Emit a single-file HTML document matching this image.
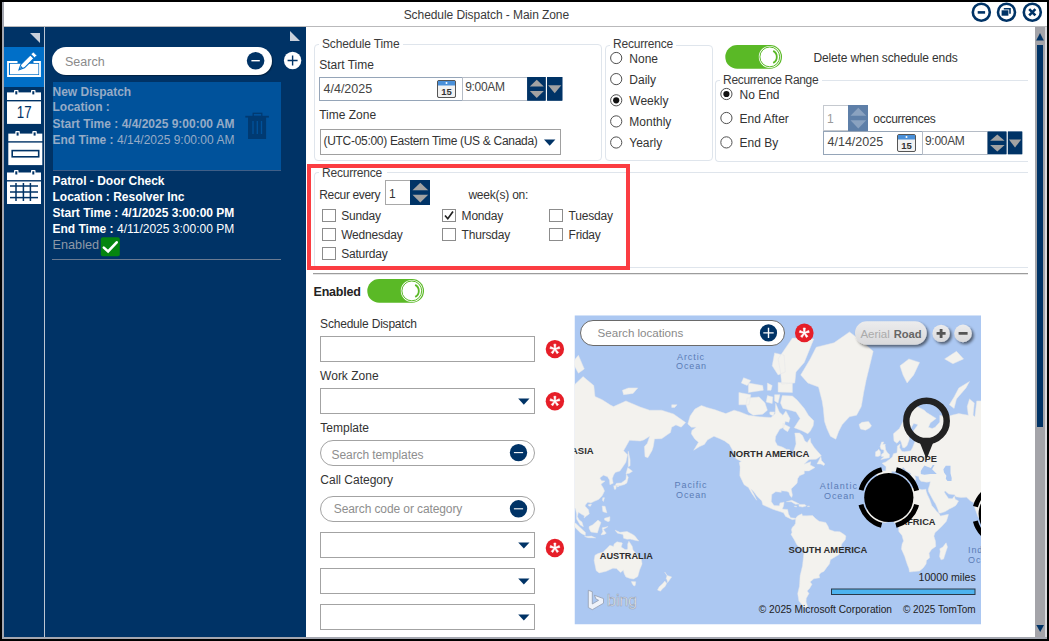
<!DOCTYPE html><html><head><meta charset="utf-8"><style>
*{margin:0;padding:0;box-sizing:border-box}
html,body{width:1049px;height:641px;overflow:hidden;background:#000;font-family:"Liberation Sans",sans-serif}
.t{position:absolute;white-space:nowrap}
.r{position:absolute}
svg{position:absolute}
</style></head><body>

<div class="r" style="left:2px;top:2px;width:1045px;height:637px;background:#a4a7b0"></div>
<div class="r" style="left:4px;top:2px;width:1043px;height:24px;background:#fff"></div>
<div class="r" style="left:4px;top:26px;width:1043px;height:1px;background:#b9b9bb"></div>
<div class="r" style="left:1045px;top:27px;width:2px;height:610px;background:#d9d9dc"></div>
<div class="r" style="left:4px;top:27px;width:1041px;height:610px;background:#fff"></div>
<div class="t" style="left:403.7px;top:9.3px;font-size:12px;line-height:12px;color:#3a3a3a;letter-spacing:-0.07px">Schedule Dispatch - Main Zone</div>
<svg style="left:960px;top:0" width="89" height="26" viewBox="960 0 89 26"><g fill="none" stroke="#003366" stroke-width="2.6"><circle cx="981.3" cy="12.2" r="8.5"/><circle cx="1006.5" cy="12.2" r="8.5"/><circle cx="1032.3" cy="12.2" r="8.5"/><path d="M977.7 12.4h7.4"/><path d="M1029.2 9.1l6.2 6.2M1035.4 9.1l-6.2 6.2"/></g><rect x="1001.6" y="10.3" width="6.8" height="5.4" fill="#003366"/><path d="M1003.8 8.8h6.2v5" fill="none" stroke="#003366" stroke-width="1.6"/></svg>
<div class="r" style="left:4px;top:27px;width:40px;height:610px;background:#003366"></div>
<div class="r" style="left:44px;top:27px;width:1px;height:610px;background:#bcc6d3"></div>
<div class="r" style="left:45px;top:27px;width:261px;height:610px;background:#003366"></div>
<div class="r" style="left:4px;top:47px;width:40px;height:40px;background:#006fc8"></div>
<svg style="left:0;top:0" width="310" height="260" viewBox="0 0 310 260"><path d="M30 33H40V43Z" fill="#c9d0da"/><path d="M290 31V41H300Z" fill="#c9d0da"/><path d="M17.5 62H8V76H40V62H33.5" fill="none" stroke="#fff" stroke-width="1.8"/><rect x="10" y="63.8" width="28.4" height="10.5" fill="#fff"/><g transform="translate(19 69.8) rotate(-45)"><path d="M0 0L5.2 -2.5H18.6V2.5H5.2Z" fill="#fff" stroke="#006fc8" stroke-width="1.1"/><path d="M1.2 0L4.2 -1.2V1.2Z" fill="#006fc8"/><rect x="19.4" y="-2.5" width="3.4" height="5" fill="#fff" stroke="#006fc8" stroke-width="0.8"/></g></svg>
<svg style="left:0;top:85px" width="50" height="125" viewBox="0 85 50 125"><rect x="7" y="92.4" width="34" height="7.6" fill="#fff"/><rect x="7" y="101.4" width="34" height="22.5" fill="#fff"/><rect x="14" y="89.9" width="4.5" height="5" rx="0.8" fill="#fff"/><rect x="15.3" y="91.2" width="2" height="3.2" fill="#003366"/><rect x="31" y="89.9" width="4.5" height="5" rx="0.8" fill="#fff"/><rect x="32.3" y="91.2" width="2" height="3.2" fill="#003366"/><text x="16.8" y="118.3" font-family="Liberation Sans" font-size="17" fill="#003366" textLength="14.8" lengthAdjust="spacingAndGlyphs">17</text><rect x="8.3" y="133.6" width="34" height="7.6" fill="#fff"/><rect x="8.3" y="142.6" width="34" height="22.5" fill="#fff"/><rect x="15.3" y="131.1" width="4.5" height="5" rx="0.8" fill="#fff"/><rect x="16.6" y="132.4" width="2" height="3.2" fill="#003366"/><rect x="32.3" y="131.1" width="4.5" height="5" rx="0.8" fill="#fff"/><rect x="33.599999999999994" y="132.4" width="2" height="3.2" fill="#003366"/><rect x="12.2" y="150.6" width="26.5" height="6.2" fill="none" stroke="#003366" stroke-width="1.6"/><rect x="7" y="172.5" width="34" height="7.6" fill="#fff"/><rect x="7" y="181.5" width="34" height="22.5" fill="#fff"/><rect x="14" y="170.0" width="4.5" height="5" rx="0.8" fill="#fff"/><rect x="15.3" y="171.3" width="2" height="3.2" fill="#003366"/><rect x="31" y="170.0" width="4.5" height="5" rx="0.8" fill="#fff"/><rect x="32.3" y="171.3" width="2" height="3.2" fill="#003366"/><g stroke="#003366" stroke-width="1.5"><path d="M10 186H38"/><path d="M10 192H38"/><path d="M10 197.6H38"/><path d="M16 183V201"/><path d="M23.4 183V201"/><path d="M30.4 183V201"/></g></svg>
<div class="r" style="left:52px;top:47px;width:220px;height:28px;background:#fff;border-radius:14px;box-shadow:1px 1px 1px rgba(0,0,0,.35)"></div>
<div class="t" style="left:65.0px;top:55.8px;font-size:12.5px;line-height:12.5px;color:#8a8a8a;">Search</div>
<svg style="left:240px;top:45px" width="70" height="32" viewBox="240 45 70 32"><circle cx="255.6" cy="60.7" r="8.8" fill="#003366"/><path d="M251.4 60.7h8.4" stroke="#fff" stroke-width="1.4"/><circle cx="292.6" cy="60.5" r="8.7" fill="#fff"/><path d="M287.6 60.5h10M292.6 55.5v10" stroke="#003366" stroke-width="1.4"/></svg>
<div class="r" style="left:53px;top:82px;width:228px;height:89px;background:#00529b;border-bottom:1px solid #3f5f88"></div>
<div class="t" style="left:52.5px;top:85.7px;font-size:12px;line-height:12px;font-weight:bold;color:#96abc6;">New Dispatch</div>
<div class="t" style="left:52.5px;top:101.4px;font-size:12px;line-height:12px;font-weight:bold;color:#96abc6;">Location :</div>
<div class="t" style="left:52.5px;top:117.5px;font-size:12px;line-height:12px;font-weight:bold;color:#96abc6;">Start Time : 4/4/2025 9:00:00 AM</div>
<div class="t" style="left:52.5px;top:133.5px;font-size:12px;line-height:12px;color:#96abc6;"><b>End Time :</b> 4/14/2025 9:00:00 AM</div>
<svg style="left:240px;top:108px" width="35" height="35" viewBox="240 108 35 35"><g fill="#003a72"><rect x="245.3" y="115.8" width="23.6" height="1.8"/><rect x="253.2" y="113.3" width="8.6" height="3.2" fill="none" stroke="#003a72" stroke-width="1.3"/><rect x="248" y="117" width="18.1" height="22"/></g><g stroke="#00529b" stroke-width="1.3"><path d="M253 121v13M257.3 121v13M261.5 121v13"/></g></svg>
<div class="t" style="left:52.5px;top:175.2px;font-size:12px;line-height:12px;font-weight:bold;color:#ffffff;">Patrol - Door Check</div>
<div class="t" style="left:52.5px;top:191.1px;font-size:12px;line-height:12px;font-weight:bold;color:#ffffff;">Location : Resolver Inc</div>
<div class="t" style="left:52.5px;top:207.1px;font-size:12px;line-height:12px;font-weight:bold;color:#ffffff;">Start Time : 4/1/2025 3:00:00 PM</div>
<div class="t" style="left:52.5px;top:223.1px;font-size:12px;line-height:12px;color:#ffffff;"><b>End Time :</b> 4/11/2025 3:00:00 PM</div>
<div class="t" style="left:52.5px;top:238.6px;font-size:12.7px;line-height:12.7px;color:#8d99a8;">Enabled</div>
<svg style="left:100px;top:236px" width="21" height="21" viewBox="100 236 21 21"><rect x="100.8" y="237.2" width="19" height="19" rx="2" fill="#05850f"/><path d="M103.8 247.6l4.3 3.9l8.6-9.2" fill="none" stroke="#fff" stroke-width="2.6" stroke-linecap="round"/></svg>
<div class="r" style="left:52px;top:259px;width:229px;height:1px;background:#6a7b92"></div>
<div class="r" style="left:1035px;top:27px;width:10px;height:610px;background:#a4a4a9"></div>
<div class="r" style="left:1037px;top:45px;width:6px;height:382px;background:#003366"></div>
<svg style="left:1035px;top:27px" width="10" height="610" viewBox="1035 27 10 610"><path d="M1036.2 40.5L1040 33L1043.8 40.5Z" fill="#003366"/><path d="M1036.3 625L1044 625L1040.2 632Z" fill="#003366"/></svg>
<div class="r" style="left:314px;top:44px;width:288px;height:117px;border:1px solid #dfe5ec;border-radius:4px;"></div>
<div class="r" style="left:319px;top:42px;width:84px;height:4px;background:#fff"></div>
<div class="t" style="left:322.0px;top:37.7px;font-size:12px;line-height:12px;color:#3b3b3b;letter-spacing:-0.15px">Schedule Time</div>
<div class="t" style="left:319.2px;top:59.1px;font-size:12px;line-height:12px;color:#333;">Start Time</div>
<div class="r" style="left:319px;top:77px;width:144px;height:24px;border:1px solid #95a5b8;background:#fff"></div>
<div class="t" style="left:323.5px;top:82.7px;font-size:12.5px;line-height:12.5px;color:#444;">4/4/2025</div>
<div class="r" style="left:462px;top:77px;width:66px;height:24px;border:1px solid #b5bcc6;background:#fff"></div>
<div class="t" style="left:465.2px;top:80.9px;font-size:12px;line-height:12px;color:#444;letter-spacing:-0.3px">9:00AM</div>
<svg style="left:0;top:0" width="1049" height="641" viewBox="0 0 1049 641"><rect x="437.5" y="80.5" width="18" height="17" rx="1.5" fill="#f2f2f2" stroke="#555" stroke-width="1"/><rect x="438" y="81" width="17" height="4.5" fill="#4a90d9"/><circle cx="446.5" cy="83" r="1" fill="#fff"/><text x="446.5" y="95.3" font-family="Liberation Sans" font-weight="bold" font-size="9.5" fill="#333" text-anchor="middle">15</text><rect x="527.3" y="77" width="18.300000000000068" height="23.599999999999994" fill="#003366"/><path d="M529.8 86.6H543.8000000000001L536.75 79.8Z" fill="#a2a2a2"/><path d="M529.8 91.0H543.8000000000001L536.75 98.0Z" fill="#a2a2a2"/><rect x="547.1" y="77" width="15.199999999999932" height="23.599999999999994" fill="#003366"/><path d="M548.1 85.3H561.3L554.7 93.3Z" fill="#a2a2a2"/><rect x="897.5" y="134.5" width="18" height="17" rx="1.5" fill="#f2f2f2" stroke="#555" stroke-width="1"/><rect x="898" y="135" width="17" height="4.5" fill="#4a90d9"/><circle cx="906.5" cy="137" r="1" fill="#fff"/><text x="906.5" y="149.3" font-family="Liberation Sans" font-weight="bold" font-size="9.5" fill="#333" text-anchor="middle">15</text><rect x="987.6" y="131.6" width="18.799999999999955" height="22.599999999999994" fill="#003366"/><path d="M990.1 140.7H1004.6L997.3 134.4Z" fill="#a2a2a2"/><path d="M990.1 145.09999999999997H1004.6L997.3 151.6Z" fill="#a2a2a2"/><rect x="1007.9" y="131.6" width="14.300000000000068" height="22.599999999999994" fill="#003366"/><path d="M1008.9 139.39999999999998H1021.2L1015.05 147.39999999999998Z" fill="#a2a2a2"/><rect x="410" y="180" width="20" height="25" fill="#003366"/><path d="M412.5 190.3H428.2L420.3 182.8Z" fill="#a2a2a2"/><path d="M412.5 194.7H428.2L420.3 202.4Z" fill="#a2a2a2"/><rect x="848" y="105" width="20" height="26" fill="#5e7fa8"/><path d="M850.5 115.8H866.2L858.3 107.8Z" fill="#8aa2c0"/><path d="M850.5 120.2H866.2L858.3 128.4Z" fill="#8aa2c0"/></svg>
<div class="t" style="left:319.2px;top:108.6px;font-size:12px;line-height:12px;color:#333;">Time Zone</div>
<div class="r" style="left:320px;top:129px;width:241px;height:26px;border:1px solid #a0a0a0;background:#fff"></div>
<div class="t" style="left:323.5px;top:134.8px;font-size:12px;line-height:12px;color:#333;letter-spacing:-0.3px">(UTC-05:00) Eastern Time (US &amp; Canada)</div>
<svg style="left:0;top:0" width="1049" height="641" viewBox="0 0 1049 641"><path d="M544 139.6H555.4L549.7 145.8Z" fill="#003366"/></svg>
<div class="r" style="left:605px;top:45px;width:108px;height:116px;border:1px solid #dfe5ec;border-radius:4px;"></div>
<div class="r" style="left:610px;top:43px;width:66px;height:4px;background:#fff"></div>
<div class="t" style="left:613.0px;top:37.7px;font-size:12px;line-height:12px;color:#3b3b3b;letter-spacing:-0.2px">Recurrence</div>
<svg style="left:0;top:0" width="1049" height="641" viewBox="0 0 1049 641"><circle cx="616.2" cy="58" r="5.6" fill="#fff" stroke="#505050" stroke-width="1"/><circle cx="616.2" cy="79.1" r="5.6" fill="#fff" stroke="#505050" stroke-width="1"/><circle cx="616.2" cy="100.3" r="5.6" fill="#fff" stroke="#505050" stroke-width="1"/><circle cx="616.2" cy="100.3" r="3.1" fill="#111"/><circle cx="616.2" cy="121.4" r="5.6" fill="#fff" stroke="#505050" stroke-width="1"/><circle cx="616.2" cy="142.5" r="5.6" fill="#fff" stroke="#505050" stroke-width="1"/><circle cx="726.4" cy="94" r="5.6" fill="#fff" stroke="#505050" stroke-width="1"/><circle cx="726.4" cy="94" r="3.1" fill="#111"/><circle cx="726.4" cy="118" r="5.6" fill="#fff" stroke="#505050" stroke-width="1"/><circle cx="726.4" cy="142.4" r="5.6" fill="#fff" stroke="#505050" stroke-width="1"/></svg>
<div class="t" style="left:629.3px;top:52.9px;font-size:12px;line-height:12px;color:#333;">None</div>
<div class="t" style="left:629.3px;top:74.0px;font-size:12px;line-height:12px;color:#333;">Daily</div>
<div class="t" style="left:629.3px;top:95.2px;font-size:12px;line-height:12px;color:#333;">Weekly</div>
<div class="t" style="left:629.3px;top:116.3px;font-size:12px;line-height:12px;color:#333;">Monthly</div>
<div class="t" style="left:629.3px;top:137.4px;font-size:12px;line-height:12px;color:#333;">Yearly</div>
<div class="t" style="left:739.5px;top:88.9px;font-size:12px;line-height:12px;color:#333;">No End</div>
<div class="t" style="left:739.5px;top:112.9px;font-size:12px;line-height:12px;color:#333;">End After</div>
<div class="t" style="left:739.5px;top:137.3px;font-size:12px;line-height:12px;color:#333;">End By</div>
<svg style="left:724.8px;top:44.8px" width="58" height="25" viewBox="0 0 58 25"><rect x="0.3" y="0" width="56.7" height="23.8" rx="11.9" fill="#5ab926"/><circle cx="44.8" cy="11.9" r="11" fill="#fff"/><circle cx="44.8" cy="11.9" r="9.9" fill="none" stroke="#5ab926" stroke-width="1"/><path d="M48.2 5.9A6.8 6.8 0 0 1 48.2 17.9" fill="none" stroke="#5ab926" stroke-width="1.8"/></svg>
<div class="t" style="left:813.4px;top:51.9px;font-size:12px;line-height:12px;color:#333;letter-spacing:-0.13px">Delete when schedule ends</div>
<div class="r" style="left:715px;top:80px;width:313px;height:82px;border:1px solid #dfe5ec;border-radius:4px;border-right:none;border-top-right-radius:0;border-bottom-right-radius:0;"></div>
<div class="r" style="left:720px;top:78px;width:102px;height:4px;background:#fff"></div>
<div class="t" style="left:723.1px;top:73.7px;font-size:12px;line-height:12px;color:#3b3b3b;letter-spacing:-0.35px">Recurrence Range</div>
<div class="r" style="left:823px;top:105px;width:26px;height:26px;border:1px solid #c5c9cf;background:#fff"></div>
<div class="t" style="left:827.0px;top:112.7px;font-size:12px;line-height:12px;color:#9a9a9a;">1</div>
<div class="t" style="left:873.3px;top:113.0px;font-size:12px;line-height:12px;color:#333;letter-spacing:-0.28px">occurrences</div>
<div class="r" style="left:823px;top:131px;width:100px;height:24px;border:1px solid #95a5b8;background:#fff"></div>
<div class="t" style="left:827.5px;top:136.1px;font-size:12.5px;line-height:12.5px;color:#444;">4/14/2025</div>
<div class="r" style="left:922px;top:131px;width:66px;height:24px;border:1px solid #b5bcc6;background:#fff"></div>
<div class="t" style="left:925.0px;top:134.8px;font-size:12px;line-height:12px;color:#444;letter-spacing:-0.3px">9:00AM</div>
<svg style="left:0;top:0" width="1049" height="641" viewBox="0 0 1049 641"><rect x="897.5" y="134.5" width="18" height="17" rx="1.5" fill="#f2f2f2" stroke="#555" stroke-width="1"/><rect x="898" y="135" width="17" height="4.5" fill="#4a90d9"/><circle cx="906.5" cy="137" r="1" fill="#fff"/><text x="906.5" y="149.3" font-family="Liberation Sans" font-weight="bold" font-size="9.5" fill="#333" text-anchor="middle">15</text><rect x="987.6" y="131.6" width="18.799999999999955" height="22.599999999999994" fill="#003366"/><path d="M990.1 140.7H1004.6L997.3 134.4Z" fill="#a2a2a2"/><path d="M990.1 145.09999999999997H1004.6L997.3 151.6Z" fill="#a2a2a2"/><rect x="1007.9" y="131.6" width="14.300000000000068" height="22.599999999999994" fill="#003366"/><path d="M1008.9 139.39999999999998H1021.2L1015.05 147.39999999999998Z" fill="#a2a2a2"/><rect x="848" y="105" width="20" height="26" fill="#5e7fa8"/><path d="M850.5 115.8H866.2L858.3 107.8Z" fill="#8aa2c0"/><path d="M850.5 120.2H866.2L858.3 128.4Z" fill="#8aa2c0"/><rect x="437.5" y="80.5" width="18" height="17" rx="1.5" fill="#f2f2f2" stroke="#555" stroke-width="1"/><rect x="438" y="81" width="17" height="4.5" fill="#4a90d9"/><circle cx="446.5" cy="83" r="1" fill="#fff"/><text x="446.5" y="95.3" font-family="Liberation Sans" font-weight="bold" font-size="9.5" fill="#333" text-anchor="middle">15</text><rect x="527.3" y="77" width="18.300000000000068" height="23.599999999999994" fill="#003366"/><path d="M529.8 86.6H543.8000000000001L536.75 79.8Z" fill="#a2a2a2"/><path d="M529.8 91.0H543.8000000000001L536.75 98.0Z" fill="#a2a2a2"/><rect x="547.1" y="77" width="15.199999999999932" height="23.599999999999994" fill="#003366"/><path d="M548.1 85.3H561.3L554.7 93.3Z" fill="#a2a2a2"/></svg>
<div class="r" style="left:314px;top:172px;width:714px;height:96px;border:1px solid #dfe5ec;border-radius:4px;border-right:none;border-top-right-radius:0;border-bottom-right-radius:0;"></div>
<div class="r" style="left:319px;top:170px;width:68px;height:4px;background:#fff"></div>
<div class="t" style="left:322.0px;top:167.1px;font-size:12px;line-height:12px;color:#3b3b3b;letter-spacing:-0.2px">Recurrence</div>
<div class="t" style="left:319.3px;top:188.5px;font-size:12px;line-height:12px;color:#333;letter-spacing:-0.35px">Recur every</div>
<div class="r" style="left:385px;top:180px;width:26px;height:25px;border:1px solid #a8a8a8;background:#fff"></div>
<div class="t" style="left:389.0px;top:188.2px;font-size:12px;line-height:12px;color:#333;">1</div>
<svg style="left:0;top:0" width="1049" height="641" viewBox="0 0 1049 641"><rect x="410" y="180" width="20" height="25" fill="#003366"/><path d="M412.5 190.3H428.2L420.3 182.8Z" fill="#a2a2a2"/><path d="M412.5 194.7H428.2L420.3 202.4Z" fill="#a2a2a2"/></svg>
<div class="t" style="left:468.4px;top:188.6px;font-size:12px;line-height:12px;color:#333;letter-spacing:-0.2px">week(s) on:</div>
<svg style="left:0;top:0" width="1049" height="641" viewBox="0 0 1049 641"><rect x="322.5" y="209.5" width="13" height="12" fill="#fff" stroke="#8c8c8c" stroke-width="1"/><rect x="442.5" y="209.5" width="13" height="12" fill="#fff" stroke="#8c8c8c" stroke-width="1"/><path d="M445 215.5l2.8 3.2l5.2-7.2" fill="none" stroke="#222" stroke-width="1.7"/><rect x="549.5" y="209.5" width="13" height="12" fill="#fff" stroke="#8c8c8c" stroke-width="1"/><rect x="322.5" y="228.5" width="13" height="12" fill="#fff" stroke="#8c8c8c" stroke-width="1"/><rect x="442.5" y="228.5" width="13" height="12" fill="#fff" stroke="#8c8c8c" stroke-width="1"/><rect x="549.5" y="228.5" width="13" height="12" fill="#fff" stroke="#8c8c8c" stroke-width="1"/><rect x="322.5" y="247.5" width="13" height="12" fill="#fff" stroke="#8c8c8c" stroke-width="1"/></svg>
<div class="t" style="left:341.2px;top:210.2px;font-size:12px;line-height:12px;color:#333;letter-spacing:-0.2px">Sunday</div>
<div class="t" style="left:461.6px;top:210.2px;font-size:12px;line-height:12px;color:#333;letter-spacing:-0.2px">Monday</div>
<div class="t" style="left:568.5px;top:210.2px;font-size:12px;line-height:12px;color:#333;letter-spacing:-0.2px">Tuesday</div>
<div class="t" style="left:341.2px;top:229.2px;font-size:12px;line-height:12px;color:#333;letter-spacing:-0.2px">Wednesday</div>
<div class="t" style="left:461.6px;top:229.2px;font-size:12px;line-height:12px;color:#333;letter-spacing:-0.2px">Thursday</div>
<div class="t" style="left:568.5px;top:229.2px;font-size:12px;line-height:12px;color:#333;letter-spacing:-0.2px">Friday</div>
<div class="t" style="left:341.2px;top:248.2px;font-size:12px;line-height:12px;color:#333;letter-spacing:-0.2px">Saturday</div>
<div class="r" style="left:307px;top:164px;width:323px;height:106px;border:4px solid #fb3d42"></div>
<div class="r" style="left:313px;top:273px;width:715px;height:1px;background:#9c9c9c"></div>
<div class="r" style="left:313px;top:274px;width:715px;height:1px;background:#e6e6e6"></div>
<div class="t" style="left:313.5px;top:286.2px;font-size:12.5px;line-height:12.5px;font-weight:bold;color:#222;letter-spacing:-0.2px">Enabled</div>
<svg style="left:367.2px;top:278.6px" width="58" height="25" viewBox="0 0 58 25"><rect x="0.3" y="0" width="56.7" height="23.8" rx="11.9" fill="#5ab926"/><circle cx="44.8" cy="11.9" r="11" fill="#fff"/><circle cx="44.8" cy="11.9" r="9.9" fill="none" stroke="#5ab926" stroke-width="1"/><path d="M48.2 5.9A6.8 6.8 0 0 1 48.2 17.9" fill="none" stroke="#5ab926" stroke-width="1.8"/></svg>
<div class="t" style="left:320.1px;top:318.3px;font-size:12px;line-height:12px;color:#333;letter-spacing:-0.2px">Schedule Dispatch</div>
<div class="r" style="left:320px;top:336px;width:215px;height:26px;border:1px solid #a3a3a3;background:#fff"></div>
<div class="t" style="left:320.1px;top:369.8px;font-size:12px;line-height:12px;color:#333;">Work Zone</div>
<div class="r" style="left:320px;top:388px;width:215px;height:26px;border:1px solid #a3a3a3;background:#fff"></div>
<div class="t" style="left:320.3px;top:422.0px;font-size:12px;line-height:12px;color:#333;">Template</div>
<div class="r" style="left:320px;top:440px;width:215px;height:26px;border:1px solid #a3a3a3;background:#fff;border-radius:13px"></div>
<div class="t" style="left:331.6px;top:448.7px;font-size:12px;line-height:12px;color:#8e8e8e;letter-spacing:-0.1px">Search templates</div>
<div class="t" style="left:320.3px;top:474.4px;font-size:12px;line-height:12px;color:#333;">Call Category</div>
<div class="r" style="left:320px;top:496px;width:215px;height:26px;border:1px solid #a3a3a3;background:#fff;border-radius:13px"></div>
<div class="t" style="left:333.8px;top:503.2px;font-size:12px;line-height:12px;color:#8e8e8e;letter-spacing:-0.1px">Search code or category</div>
<div class="r" style="left:320px;top:532px;width:215px;height:26px;border:1px solid #a3a3a3;background:#fff"></div>
<div class="r" style="left:320px;top:568px;width:215px;height:26px;border:1px solid #a3a3a3;background:#fff"></div>
<div class="r" style="left:320px;top:604px;width:215px;height:26px;border:1px solid #a3a3a3;background:#fff"></div>
<svg style="left:0;top:0" width="1049" height="641" viewBox="0 0 1049 641"><circle cx="554.9" cy="349.1" r="9.2" fill="#e61e28"/><path d="M554.50 349.10L553.85 344.20L555.95 344.20L555.30 349.10ZM554.78 349.48L549.92 348.58L550.56 346.59L555.02 348.72ZM555.22 349.34L552.87 353.68L551.17 352.45L554.58 348.86ZM555.22 348.86L558.63 352.45L556.93 353.68L554.58 349.34ZM554.78 348.72L559.24 346.59L559.88 348.58L555.02 349.48Z" fill="#fff" stroke="#fff" stroke-width="0.6" stroke-linejoin="round"/><circle cx="554.9" cy="349.1" r="1" fill="#fff"/><circle cx="554.9" cy="401.2" r="9.2" fill="#e61e28"/><path d="M554.50 401.20L553.85 396.30L555.95 396.30L555.30 401.20ZM554.78 401.58L549.92 400.68L550.56 398.69L555.02 400.82ZM555.22 401.44L552.87 405.78L551.17 404.55L554.58 400.96ZM555.22 400.96L558.63 404.55L556.93 405.78L554.58 401.44ZM554.78 400.82L559.24 398.69L559.88 400.68L555.02 401.58Z" fill="#fff" stroke="#fff" stroke-width="0.6" stroke-linejoin="round"/><circle cx="554.9" cy="401.2" r="1" fill="#fff"/><circle cx="554.9" cy="548" r="9.2" fill="#e61e28"/><path d="M554.50 548.00L553.85 543.10L555.95 543.10L555.30 548.00ZM554.78 548.38L549.92 547.48L550.56 545.49L555.02 547.62ZM555.22 548.24L552.87 552.58L551.17 551.35L554.58 547.76ZM555.22 547.76L558.63 551.35L556.93 552.58L554.58 548.24ZM554.78 547.62L559.24 545.49L559.88 547.48L555.02 548.38Z" fill="#fff" stroke="#fff" stroke-width="0.6" stroke-linejoin="round"/><circle cx="554.9" cy="548" r="1" fill="#fff"/><path d="M518.2 398.6H529.5L523.85 404.7Z" fill="#003366"/><path d="M518.2 542.5H529.5L523.85 548.6Z" fill="#003366"/><path d="M518.2 578.5H529.5L523.85 584.6Z" fill="#003366"/><path d="M518.2 614.5H529.5L523.85 620.6Z" fill="#003366"/><circle cx="518.5" cy="452.6" r="8.7" fill="#003366"/><path d="M513.9 452.6h9.2" stroke="#fff" stroke-width="1.1"/><circle cx="518.5" cy="508.8" r="8.7" fill="#003366"/><path d="M513.9 508.8h9.2" stroke="#fff" stroke-width="1.1"/></svg>
<svg style="left:0;top:0" width="1049" height="641" viewBox="0 0 1049 641"><defs><clipPath id="mc"><rect x="574.5" y="315.3" width="406.5" height="309.2"/></clipPath></defs><g clip-path="url(#mc)"><rect x="574.5" y="315.3" width="406.5" height="309.2" fill="#acc8f2"/><path d="M687.8 424.1L690.1 415.9L694.9 409.1L701.4 405.5L706.8 407.4L715.1 409.8L719.9 411.6L725.8 413.6L734.1 410.2L740.1 411.9L748.4 415.2L759.1 416.8L771.0 417.5L775.1 413.6L775.7 403.3L779.3 411.9L782.9 415.2L785.9 410.9L790.0 418.4L788.8 422.3L785.3 421.4L784.1 427.2L779.9 429.1L775.7 436.3L775.1 441.0L777.5 445.5L782.3 447.0L786.4 449.2L789.7 449.6L790.0 454.8L792.4 457.1L793.6 455.8L793.8 450.8L796.0 444.0L795.4 437.5L794.8 433.0L799.5 433.0L802.5 435.5L804.9 441.0L807.2 442.6L810.2 438.2L810.8 442.2L814.4 447.7L819.7 453.8L821.3 455.8L816.2 459.2L809.0 459.6L804.3 464.1L810.8 461.7L810.2 464.9L815.0 467.5L809.0 470.9L804.3 470.9L804.3 473.8L799.5 475.7L797.7 478.7L797.1 483.2L791.2 488.9L792.4 495.0L791.8 497.4L790.0 495.7L788.8 492.3L786.4 491.3L781.1 490.7L781.3 492.3L775.7 491.7L771.8 494.4L771.3 501.6L774.0 505.6L779.3 505.8L780.0 502.9L784.1 502.2L783.5 506.0L782.3 509.1L787.6 509.4L788.5 514.0L790.6 517.7L795.4 518.3L795.6 519.1L792.4 519.7L785.6 516.5L783.5 512.8L778.1 511.0L773.4 509.5L762.7 504.8L761.8 500.9L757.3 496.6L753.8 491.7L751.0 488.9L754.3 495.0L756.7 500.3L752.0 493.7L748.4 487.5L744.1 484.7L741.9 480.2L739.8 475.8L740.1 466.7L739.2 462.5L741.3 461.4L735.9 458.6L732.9 450.8L729.4 444.4L724.6 441.0L719.9 438.7L713.9 436.3L707.4 439.9L704.4 444.4L699.7 446.6L693.7 450.2L698.5 442.2L694.9 439.2L691.3 433.8L691.9 430.4L696.1 427.2L691.3 427.2ZM259.8 424.1L262.1 415.9L266.9 409.1L273.4 405.5L278.8 407.4L287.1 409.8L291.9 411.6L297.8 413.6L306.1 410.2L312.1 411.9L320.4 415.2L331.1 416.8L343.0 417.5L347.1 413.6L347.7 403.3L351.3 411.9L354.9 415.2L357.9 410.9L362.0 418.4L360.8 422.3L357.3 421.4L356.1 427.2L351.9 429.1L347.7 436.3L347.1 441.0L349.5 445.5L354.3 447.0L358.4 449.2L361.7 449.6L362.0 454.8L364.4 457.1L365.6 455.8L365.8 450.8L368.0 444.0L367.4 437.5L366.8 433.0L371.5 433.0L374.5 435.5L376.9 441.0L379.2 442.6L382.2 438.2L382.8 442.2L386.4 447.7L391.7 453.8L393.3 455.8L388.2 459.2L381.0 459.6L376.3 464.1L382.8 461.7L382.2 464.9L387.0 467.5L381.0 470.9L376.3 470.9L376.3 473.8L371.5 475.7L369.7 478.7L369.1 483.2L363.2 488.9L364.4 495.0L363.8 497.4L362.0 495.7L360.8 492.3L358.4 491.3L353.1 490.7L353.3 492.3L347.7 491.7L343.8 494.4L343.3 501.6L346.0 505.6L351.3 505.8L352.0 502.9L356.1 502.2L355.5 506.0L354.3 509.1L359.6 509.4L360.5 514.0L362.6 517.7L367.4 518.3L367.6 519.1L364.4 519.7L357.6 516.5L355.5 512.8L350.1 511.0L345.4 509.5L334.7 504.8L333.8 500.9L329.3 496.6L325.8 491.7L323.0 488.9L326.3 495.0L328.7 500.3L324.0 493.7L320.4 487.5L316.1 484.7L313.9 480.2L311.8 475.8L312.1 466.7L311.2 462.5L313.3 461.4L307.9 458.6L304.9 450.8L301.4 444.4L296.6 441.0L291.9 438.7L285.9 436.3L279.4 439.9L276.4 444.4L271.7 446.6L265.7 450.2L270.5 442.2L266.9 439.2L263.3 433.8L263.9 430.4L268.1 427.2L263.3 427.2ZM1115.8 424.1L1118.1 415.9L1122.9 409.1L1129.4 405.5L1134.8 407.4L1143.1 409.8L1147.9 411.6L1153.8 413.6L1162.1 410.2L1168.1 411.9L1176.4 415.2L1187.1 416.8L1199.0 417.5L1203.2 413.6L1203.7 403.3L1207.3 411.9L1210.9 415.2L1213.8 410.9L1218.0 418.4L1216.8 422.3L1213.3 421.4L1212.1 427.2L1207.9 429.1L1203.7 436.3L1203.2 441.0L1205.5 445.5L1210.3 447.0L1214.4 449.2L1217.7 449.6L1218.0 454.8L1220.4 457.1L1221.6 455.8L1221.8 450.8L1224.0 444.0L1223.4 437.5L1222.8 433.0L1227.5 433.0L1230.5 435.5L1232.9 441.0L1235.2 442.6L1238.2 438.2L1238.8 442.2L1242.4 447.7L1247.7 453.8L1249.3 455.8L1244.2 459.2L1237.0 459.6L1232.3 464.1L1238.8 461.7L1238.2 464.9L1243.0 467.5L1237.0 470.9L1232.3 470.9L1232.3 473.8L1227.5 475.7L1225.7 478.7L1225.1 483.2L1219.2 488.9L1220.4 495.0L1219.8 497.4L1218.0 495.7L1216.8 492.3L1214.4 491.3L1209.1 490.7L1209.3 492.3L1203.7 491.7L1199.8 494.4L1199.3 501.6L1202.0 505.6L1207.3 505.8L1208.0 502.9L1212.1 502.2L1211.5 506.0L1210.3 509.1L1215.6 509.4L1216.5 514.0L1218.6 517.7L1223.4 518.3L1223.6 519.1L1220.4 519.7L1213.6 516.5L1211.5 512.8L1206.1 511.0L1201.4 509.5L1190.7 504.8L1189.8 500.9L1185.3 496.6L1181.8 491.7L1179.0 488.9L1182.3 495.0L1184.7 500.3L1180.0 493.7L1176.4 487.5L1172.1 484.7L1169.9 480.2L1167.8 475.8L1168.1 466.7L1167.2 462.5L1169.3 461.4L1163.9 458.6L1160.9 450.8L1157.4 444.4L1152.6 441.0L1147.9 438.7L1141.9 436.3L1135.4 439.9L1132.4 444.4L1127.7 446.6L1121.7 450.2L1126.5 442.2L1122.9 439.2L1119.3 433.8L1119.9 430.4L1124.1 427.2L1119.3 427.2ZM800.7 374.9L810.2 358.9L816.2 347.2L834.0 342.8L849.5 331.9L863.7 342.8L873.2 351.3L866.1 380.4L863.7 392.5L861.3 406.6L856.6 415.2L849.5 416.8L842.3 424.4L838.8 431.2L835.8 439.2L830.4 436.3L826.9 428.5L824.5 421.4L823.3 408.4L822.1 400.9L818.5 387.0L807.8 383.0ZM372.7 374.9L382.2 358.9L388.2 347.2L406.0 342.8L421.5 331.9L435.7 342.8L445.2 351.3L438.1 380.4L435.7 392.5L433.3 406.6L428.6 415.2L421.5 416.8L414.3 424.4L410.8 431.2L407.8 439.2L402.4 436.3L398.9 428.5L396.5 421.4L395.3 408.4L394.1 400.9L390.5 387.0L379.8 383.0ZM1228.7 374.9L1238.2 358.9L1244.2 347.2L1262.0 342.8L1277.5 331.9L1291.7 342.8L1301.2 351.3L1294.1 380.4L1291.7 392.5L1289.3 406.6L1284.6 415.2L1277.5 416.8L1270.3 424.4L1266.8 431.2L1263.8 439.2L1258.4 436.3L1254.9 428.5L1252.5 421.4L1251.3 408.4L1250.1 400.9L1246.5 387.0L1235.8 383.0ZM795.6 518.3L797.7 515.8L801.9 513.8L802.5 515.8L806.7 515.8L812.6 515.6L815.3 518.3L819.1 521.3L825.7 522.4L828.1 526.3L829.2 529.6L834.6 531.4L839.9 531.7L843.5 534.1L845.9 536.1L845.3 539.7L841.7 544.0L840.9 549.5L839.1 554.6L835.8 556.5L830.4 559.8L829.6 563.8L826.9 567.2L823.9 571.4L820.9 572.7L819.1 575.1L819.7 577.8L813.8 578.8L810.2 581.9L812.0 584.3L809.6 588.4L807.2 591.0L809.0 593.6L806.3 598.2L806.1 602.0L807.8 607.0L804.3 607.4L798.9 601.0L797.7 593.6L799.5 585.9L800.1 575.8L802.5 565.8L803.9 552.7L802.6 549.5L797.1 545.2L794.2 539.7L791.0 534.4L792.0 532.3L791.4 529.6L792.4 527.2L794.2 525.4L795.4 523.6L795.6 520.1ZM367.6 518.3L369.7 515.8L373.9 513.8L374.5 515.8L378.7 515.8L384.6 515.6L387.3 518.3L391.1 521.3L397.7 522.4L400.1 526.3L401.2 529.6L406.6 531.4L411.9 531.7L415.5 534.1L417.9 536.1L417.3 539.7L413.7 544.0L412.9 549.5L411.1 554.6L407.8 556.5L402.4 559.8L401.6 563.8L398.9 567.2L395.9 571.4L392.9 572.7L391.1 575.1L391.7 577.8L385.8 578.8L382.2 581.9L384.0 584.3L381.6 588.4L379.2 591.0L381.0 593.6L378.3 598.2L378.1 602.0L379.8 607.0L376.3 607.4L370.9 601.0L369.7 593.6L371.5 585.9L372.1 575.8L374.5 565.8L375.9 552.7L374.6 549.5L369.1 545.2L366.2 539.7L363.0 534.4L364.0 532.3L363.4 529.6L364.4 527.2L366.2 525.4L367.4 523.6L367.6 520.1ZM1223.6 518.3L1225.7 515.8L1229.9 513.8L1230.5 515.8L1234.7 515.8L1240.6 515.6L1243.3 518.3L1247.1 521.3L1253.7 522.4L1256.1 526.3L1257.2 529.6L1262.6 531.4L1267.9 531.7L1271.5 534.1L1273.9 536.1L1273.3 539.7L1269.7 544.0L1268.9 549.5L1267.1 554.6L1263.8 556.5L1258.4 559.8L1257.6 563.8L1254.9 567.2L1251.9 571.4L1248.9 572.7L1247.1 575.1L1247.7 577.8L1241.8 578.8L1238.2 581.9L1240.0 584.3L1237.6 588.4L1235.2 591.0L1237.0 593.6L1234.3 598.2L1234.1 602.0L1235.8 607.0L1232.3 607.4L1226.9 601.0L1225.7 593.6L1227.5 585.9L1228.1 575.8L1230.5 565.8L1231.9 552.7L1230.6 549.5L1225.1 545.2L1222.2 539.7L1219.0 534.4L1220.0 532.3L1219.4 529.6L1220.4 527.2L1222.2 525.4L1223.4 523.6L1223.6 520.1ZM880.4 482.8L885.1 483.8L891.1 481.3L899.4 480.5L900.6 481.3L899.6 484.7L901.2 486.8L905.6 487.8L910.1 490.6L911.3 488.2L914.8 487.4L917.2 488.6L922.0 489.7L925.9 489.2L926.1 491.1L927.3 494.4L929.7 499.6L931.8 505.6L933.4 507.3L936.8 511.6L939.0 513.4L940.4 516.0L948.4 514.3L948.1 516.0L946.4 521.3L942.2 526.0L938.6 529.6L935.1 532.6L933.9 536.1L935.4 541.0L935.8 546.4L931.5 549.5L929.1 553.3L929.7 557.8L926.5 560.4L926.1 563.9L923.2 567.9L919.6 571.0L913.7 571.6L909.5 572.0L908.9 568.6L907.1 563.9L904.7 556.5L901.4 548.9L902.1 544.0L903.5 541.0L902.0 535.5L898.8 531.4L898.6 527.2L899.0 523.6L897.6 523.0L894.6 523.3L892.9 520.9L889.3 521.1L885.1 522.7L882.1 522.2L878.6 523.2L873.8 520.3L871.7 518.3L869.7 515.5L867.5 513.5L866.7 510.7L867.9 504.8L867.3 502.9L870.3 496.4L872.0 494.1L875.8 491.3L876.2 487.5L879.4 485.4ZM452.4 482.8L457.1 483.8L463.1 481.3L471.4 480.5L472.6 481.3L471.6 484.7L473.2 486.8L477.6 487.8L482.1 490.6L483.3 488.2L486.8 487.4L489.2 488.6L494.0 489.7L497.9 489.2L498.1 491.1L499.3 494.4L501.7 499.6L503.8 505.6L505.4 507.3L508.8 511.6L511.0 513.4L512.4 516.0L520.4 514.3L520.1 516.0L518.4 521.3L514.2 526.0L510.6 529.6L507.1 532.6L505.9 536.1L507.4 541.0L507.8 546.4L503.5 549.5L501.1 553.3L501.7 557.8L498.5 560.4L498.1 563.9L495.2 567.9L491.6 571.0L485.7 571.6L481.5 572.0L480.9 568.6L479.1 563.9L476.7 556.5L473.4 548.9L474.1 544.0L475.5 541.0L474.0 535.5L470.8 531.4L470.6 527.2L471.0 523.6L469.6 523.0L466.6 523.3L464.9 520.9L461.3 521.1L457.1 522.7L454.1 522.2L450.6 523.2L445.8 520.3L443.7 518.3L441.7 515.5L439.5 513.5L438.7 510.7L439.9 504.8L439.3 502.9L442.3 496.4L444.0 494.1L447.8 491.3L448.2 487.5L451.4 485.4ZM1308.4 482.8L1313.1 483.8L1319.1 481.3L1327.4 480.5L1328.6 481.3L1327.6 484.7L1329.2 486.8L1333.6 487.8L1338.1 490.6L1339.3 488.2L1342.8 487.4L1345.2 488.6L1350.0 489.7L1353.9 489.2L1354.1 491.1L1355.3 494.4L1357.7 499.6L1359.8 505.6L1361.4 507.3L1364.8 511.6L1367.0 513.4L1368.4 516.0L1376.4 514.3L1376.1 516.0L1374.3 521.3L1370.2 526.0L1366.6 529.6L1363.1 532.6L1361.9 536.1L1363.4 541.0L1363.8 546.4L1359.5 549.5L1357.1 553.3L1357.7 557.8L1354.5 560.4L1354.1 563.9L1351.2 567.9L1347.6 571.0L1341.7 571.6L1337.5 572.0L1336.9 568.6L1335.1 563.9L1332.7 556.5L1329.4 548.9L1330.1 544.0L1331.5 541.0L1330.0 535.5L1326.8 531.4L1326.6 527.2L1327.0 523.6L1325.6 523.0L1322.6 523.3L1320.8 520.9L1317.3 521.1L1313.1 522.7L1310.2 522.2L1306.6 523.2L1301.8 520.3L1299.7 518.3L1297.7 515.5L1295.5 513.5L1294.7 510.7L1295.9 504.8L1295.3 502.9L1298.3 496.4L1300.0 494.1L1303.8 491.3L1304.2 487.5L1307.4 485.4ZM946.1 542.8L947.5 547.1L946.4 550.2L943.6 559.1L941.0 559.8L939.5 556.5L940.2 551.4L939.8 548.7L942.8 547.1ZM518.1 542.8L519.5 547.1L518.4 550.2L515.6 559.1L513.0 559.8L511.5 556.5L512.2 551.4L511.8 548.7L514.8 547.1ZM1374.1 542.8L1375.5 547.1L1374.3 550.2L1371.6 559.1L1369.0 559.8L1367.5 556.5L1368.2 551.4L1367.8 548.7L1370.8 547.1ZM880.8 482.5L876.8 481.0L877.0 474.9L876.4 471.7L878.0 470.5L885.7 471.0L886.1 466.7L882.1 463.2L885.7 461.9L889.3 459.6L892.3 457.1L893.4 453.8L897.0 452.8L897.4 446.0L900.1 444.0L899.6 447.7L901.8 451.2L904.1 451.8L910.7 450.8L912.5 447.7L915.4 440.3L920.8 439.9L916.0 438.7L913.7 437.5L913.1 431.2L917.2 425.8L917.6 424.4L913.7 423.5L908.3 432.5L909.5 438.7L907.1 445.5L904.7 447.7L902.7 447.7L901.2 442.2L900.0 439.9L897.0 443.3L894.0 441.0L893.4 433.8L899.4 428.5L903.0 421.4L905.9 415.2L910.1 410.9L917.2 406.6L924.4 410.2L926.7 412.6L936.2 418.4L930.3 422.9L928.5 427.2L932.1 428.5L935.1 427.2L939.8 422.0L939.8 415.2L946.9 416.8L951.7 415.2L958.8 413.6L968.3 415.2L967.2 406.6L969.5 398.9L974.3 402.9L973.1 415.2L974.9 416.8L976.7 400.9L982.6 400.9L983.8 395.6L990.9 394.7L1001.6 385.5L1011.1 376.6L1021.8 385.5L1023.0 396.4L1030.2 399.7L1038.5 405.1L1041.5 406.6L1053.9 400.9L1068.2 407.0L1077.7 410.2L1089.6 410.2L1101.5 413.9L1113.7 422.6L1109.2 427.2L1103.9 424.9L1099.7 427.2L1098.5 432.5L1093.2 436.3L1089.6 438.7L1082.5 438.9L1081.3 446.6L1080.1 450.4L1075.9 457.7L1073.0 456.7L1072.4 446.6L1075.3 443.3L1077.7 436.3L1071.8 439.9L1068.2 441.0L1057.5 440.3L1051.6 450.8L1055.5 454.8L1053.9 462.3L1048.0 470.9L1043.2 472.5L1041.5 475.2L1040.3 478.7L1041.2 483.2L1037.9 484.7L1037.5 480.2L1035.5 476.7L1031.4 475.2L1027.8 478.0L1029.6 480.7L1033.1 481.0L1029.0 484.2L1031.4 488.2L1032.5 491.0L1030.2 495.7L1026.6 499.6L1022.4 501.3L1018.9 502.9L1015.9 502.2L1014.1 504.1L1013.0 506.0L1016.5 509.7L1017.3 514.0L1014.7 515.8L1012.1 518.0L1012.3 515.8L1010.0 514.6L1006.4 512.2L1005.4 516.5L1007.0 519.7L1010.0 522.1L1011.4 526.7L1008.2 525.1L1004.6 518.9L1004.6 514.0L1003.4 508.5L999.6 509.1L999.3 505.4L997.1 502.2L993.3 501.8L990.3 504.1L987.4 506.6L983.0 509.7L982.6 515.8L979.6 518.9L977.9 516.5L976.1 511.6L974.3 506.6L974.1 502.9L970.7 500.9L968.9 499.6L966.6 497.2L960.6 497.4L955.9 496.8L954.4 494.8L948.7 494.0L945.2 491.0L944.3 491.9L945.3 493.7L947.5 497.0L948.7 498.6L952.3 498.7L954.4 496.1L955.3 499.3L958.6 500.9L955.9 505.4L952.9 507.3L949.3 509.1L945.2 511.6L941.0 513.1L939.0 513.1L938.0 509.7L935.6 504.1L933.6 500.9L929.7 493.7L928.6 491.7L928.2 489.2L929.7 484.7L930.3 481.7L926.7 482.2L923.8 481.7L920.8 481.3L919.0 478.7L918.8 476.4L914.8 475.7L916.0 479.5L913.1 481.3L912.5 478.7L910.7 476.0L910.7 473.3L906.5 470.9L903.5 467.5L902.1 467.9L902.4 470.0L904.1 472.5L907.1 474.1L909.5 476.1L907.7 478.0L907.1 479.5L906.0 479.5L906.3 476.4L904.1 474.9L901.8 473.4L900.0 471.7L898.0 469.4L895.2 471.5L891.7 471.2L891.3 473.4L888.1 475.7L887.1 478.0L887.7 478.4L885.7 481.0L884.5 481.4ZM452.8 482.5L448.8 481.0L449.0 474.9L448.4 471.7L450.0 470.5L457.7 471.0L458.1 466.7L454.1 463.2L457.7 461.9L461.3 459.6L464.3 457.1L465.4 453.8L469.0 452.8L469.4 446.0L472.1 444.0L471.6 447.7L473.8 451.2L476.1 451.8L482.7 450.8L484.5 447.7L487.4 440.3L492.8 439.9L488.0 438.7L485.7 437.5L485.1 431.2L489.2 425.8L489.6 424.4L485.7 423.5L480.3 432.5L481.5 438.7L479.1 445.5L476.7 447.7L474.7 447.7L473.2 442.2L472.0 439.9L469.0 443.3L466.0 441.0L465.4 433.8L471.4 428.5L475.0 421.4L477.9 415.2L482.1 410.9L489.2 406.6L496.4 410.2L498.7 412.6L508.2 418.4L502.3 422.9L500.5 427.2L504.1 428.5L507.1 427.2L511.8 422.0L511.8 415.2L518.9 416.8L523.7 415.2L530.8 413.6L540.3 415.2L539.2 406.6L541.5 398.9L546.3 402.9L545.1 415.2L546.9 416.8L548.7 400.9L554.6 400.9L555.8 395.6L562.9 394.7L573.6 385.5L583.1 376.6L593.8 385.5L595.0 396.4L602.2 399.7L610.5 405.1L613.5 406.6L625.9 400.9L640.2 407.0L649.7 410.2L661.6 410.2L673.5 413.9L685.7 422.6L681.2 427.2L675.9 424.9L671.7 427.2L670.5 432.5L665.2 436.3L661.6 438.7L654.5 438.9L653.3 446.6L652.1 450.4L647.9 457.7L645.0 456.7L644.4 446.6L647.3 443.3L649.7 436.3L643.8 439.9L640.2 441.0L629.5 440.3L623.6 450.8L627.5 454.8L625.9 462.3L620.0 470.9L615.2 472.5L613.5 475.2L612.3 478.7L613.2 483.2L609.9 484.7L609.5 480.2L607.5 476.7L603.4 475.2L599.8 478.0L601.6 480.7L605.1 481.0L601.0 484.2L603.4 488.2L604.5 491.0L602.2 495.7L598.6 499.6L594.4 501.3L590.9 502.9L587.9 502.2L586.1 504.1L585.0 506.0L588.5 509.7L589.3 514.0L586.7 515.8L584.1 518.0L584.3 515.8L582.0 514.6L578.4 512.2L577.4 516.5L579.0 519.7L582.0 522.1L583.4 526.7L580.2 525.1L576.6 518.9L576.6 514.0L575.4 508.5L571.6 509.1L571.3 505.4L569.1 502.2L565.3 501.8L562.3 504.1L559.4 506.6L555.0 509.7L554.6 515.8L551.6 518.9L549.9 516.5L548.1 511.6L546.3 506.6L546.1 502.9L542.7 500.9L540.9 499.6L538.6 497.2L532.6 497.4L527.9 496.8L526.4 494.8L520.7 494.0L517.2 491.0L516.3 491.9L517.3 493.7L519.5 497.0L520.7 498.6L524.3 498.7L526.4 496.1L527.3 499.3L530.6 500.9L527.9 505.4L524.9 507.3L521.3 509.1L517.2 511.6L513.0 513.1L511.0 513.1L510.0 509.7L507.6 504.1L505.6 500.9L501.7 493.7L500.6 491.7L500.2 489.2L501.7 484.7L502.3 481.7L498.7 482.2L495.8 481.7L492.8 481.3L491.0 478.7L490.8 476.4L486.8 475.7L488.0 479.5L485.1 481.3L484.5 478.7L482.7 476.0L482.7 473.3L478.5 470.9L475.5 467.5L474.1 467.9L474.4 470.0L476.1 472.5L479.1 474.1L481.5 476.1L479.7 478.0L479.1 479.5L478.0 479.5L478.3 476.4L476.1 474.9L473.8 473.4L472.0 471.7L470.0 469.4L467.2 471.5L463.7 471.2L463.3 473.4L460.1 475.7L459.1 478.0L459.7 478.4L457.7 481.0L456.5 481.4ZM1308.8 482.5L1304.8 481.0L1305.0 474.9L1304.4 471.7L1306.0 470.5L1313.7 471.0L1314.1 466.7L1310.2 463.2L1313.7 461.9L1317.3 459.6L1320.3 457.1L1321.4 453.8L1325.0 452.8L1325.4 446.0L1328.1 444.0L1327.6 447.7L1329.8 451.2L1332.1 451.8L1338.7 450.8L1340.5 447.7L1343.4 440.3L1348.8 439.9L1344.0 438.7L1341.7 437.5L1341.1 431.2L1345.2 425.8L1345.6 424.4L1341.7 423.5L1336.3 432.5L1337.5 438.7L1335.1 445.5L1332.7 447.7L1330.7 447.7L1329.2 442.2L1328.0 439.9L1325.0 443.3L1322.0 441.0L1321.4 433.8L1327.4 428.5L1331.0 421.4L1333.9 415.2L1338.1 410.9L1345.2 406.6L1352.4 410.2L1354.7 412.6L1364.2 418.4L1358.3 422.9L1356.5 427.2L1360.1 428.5L1363.1 427.2L1367.8 422.0L1367.8 415.2L1374.9 416.8L1379.7 415.2L1386.8 413.6L1396.3 415.2L1395.2 406.6L1397.5 398.9L1402.3 402.9L1401.1 415.2L1402.9 416.8L1404.7 400.9L1410.6 400.9L1411.8 395.6L1418.9 394.7L1429.6 385.5L1439.1 376.6L1449.8 385.5L1451.0 396.4L1458.2 399.7L1466.5 405.1L1469.5 406.6L1481.9 400.9L1496.2 407.0L1505.7 410.2L1517.6 410.2L1529.5 413.9L1541.7 422.6L1537.2 427.2L1531.9 424.9L1527.7 427.2L1526.5 432.5L1521.2 436.3L1517.6 438.7L1510.5 438.9L1509.3 446.6L1508.1 450.4L1503.9 457.7L1501.0 456.7L1500.4 446.6L1503.3 443.3L1505.7 436.3L1499.8 439.9L1496.2 441.0L1485.5 440.3L1479.6 450.8L1483.5 454.8L1481.9 462.3L1476.0 470.9L1471.2 472.5L1469.5 475.2L1468.3 478.7L1469.2 483.2L1465.9 484.7L1465.5 480.2L1463.5 476.7L1459.4 475.2L1455.8 478.0L1457.6 480.7L1461.1 481.0L1457.0 484.2L1459.4 488.2L1460.5 491.0L1458.2 495.7L1454.6 499.6L1450.4 501.3L1446.9 502.9L1443.9 502.2L1442.1 504.1L1441.0 506.0L1444.5 509.7L1445.3 514.0L1442.7 515.8L1440.1 518.0L1440.3 515.8L1438.0 514.6L1434.4 512.2L1433.4 516.5L1435.0 519.7L1438.0 522.1L1439.4 526.7L1436.2 525.1L1432.6 518.9L1432.6 514.0L1431.4 508.5L1427.6 509.1L1427.3 505.4L1425.1 502.2L1421.3 501.8L1418.3 504.1L1415.4 506.6L1411.0 509.7L1410.6 515.8L1407.6 518.9L1405.9 516.5L1404.1 511.6L1402.3 506.6L1402.1 502.9L1398.7 500.9L1396.9 499.6L1394.6 497.2L1388.6 497.4L1383.9 496.8L1382.4 494.8L1376.7 494.0L1373.2 491.0L1372.3 491.9L1373.3 493.7L1375.5 497.0L1376.7 498.6L1380.3 498.7L1382.4 496.1L1383.3 499.3L1386.6 500.9L1383.9 505.4L1380.9 507.3L1377.3 509.1L1373.2 511.6L1369.0 513.1L1367.0 513.1L1366.0 509.7L1363.7 504.1L1361.6 500.9L1357.7 493.7L1356.6 491.7L1356.2 489.2L1357.7 484.7L1358.3 481.7L1354.7 482.2L1351.8 481.7L1348.8 481.3L1347.0 478.7L1346.8 476.4L1342.8 475.7L1344.0 479.5L1341.1 481.3L1340.5 478.7L1338.7 476.0L1338.7 473.3L1334.5 470.9L1331.5 467.5L1330.1 467.9L1330.4 470.0L1332.1 472.5L1335.1 474.1L1337.5 476.1L1335.7 478.0L1335.1 479.5L1334.0 479.5L1334.3 476.4L1332.1 474.9L1329.8 473.4L1328.0 471.7L1326.0 469.4L1323.2 471.5L1319.7 471.2L1319.3 473.4L1316.1 475.7L1315.1 478.0L1315.7 478.4L1313.7 481.0L1312.5 481.4ZM782.3 395.6L792.4 396.0L797.1 400.1L804.3 408.4L808.4 415.2L813.8 420.8L813.2 425.8L810.2 431.2L807.8 433.8L801.9 430.7L794.2 427.7L800.1 418.4L796.0 411.9L790.0 410.2L782.9 408.4L780.5 402.9ZM354.3 395.6L364.4 396.0L369.1 400.1L376.3 408.4L380.4 415.2L385.8 420.8L385.2 425.8L382.2 431.2L379.8 433.8L373.9 430.7L366.2 427.7L372.1 418.4L368.0 411.9L362.0 410.2L354.9 408.4L352.5 402.9ZM1210.3 395.6L1220.4 396.0L1225.1 400.1L1232.3 408.4L1236.4 415.2L1241.8 420.8L1241.2 425.8L1238.2 431.2L1235.8 433.8L1229.9 430.7L1222.2 427.7L1228.1 418.4L1224.0 411.9L1218.0 410.2L1210.9 408.4L1208.5 402.9ZM778.1 358.9L792.4 338.1L813.8 339.0L804.3 362.4L796.0 372.0L794.8 383.0L781.7 384.0L780.5 372.0ZM350.1 358.9L364.4 338.1L385.8 339.0L376.3 362.4L368.0 372.0L366.8 383.0L353.7 384.0L352.5 372.0ZM1206.1 358.9L1220.4 338.1L1241.8 339.0L1232.3 362.4L1224.0 372.0L1222.8 383.0L1209.7 384.0L1208.5 372.0ZM778.1 382.5L792.4 383.0L792.4 392.5L778.1 392.1ZM350.1 382.5L364.4 383.0L364.4 392.5L350.1 392.1ZM1206.1 382.5L1220.4 383.0L1220.4 392.5L1206.1 392.1ZM747.2 398.1L759.1 396.9L765.0 402.9L767.4 410.2L762.7 414.2L753.2 415.2L748.4 411.9L746.0 404.8ZM319.2 398.1L331.1 396.9L337.0 402.9L339.4 410.2L334.7 414.2L325.2 415.2L320.4 411.9L318.0 404.8ZM1175.2 398.1L1187.1 396.9L1193.0 402.9L1195.4 410.2L1190.7 414.2L1181.2 415.2L1176.4 411.9L1174.0 404.8ZM738.9 392.5L750.8 394.7L749.0 404.8L738.9 404.8ZM310.9 392.5L322.8 394.7L321.0 404.8L310.9 404.8ZM1166.9 392.5L1178.8 394.7L1177.0 404.8L1166.9 404.8ZM748.4 383.0L762.7 385.5L763.3 390.3L748.4 392.5ZM320.4 383.0L334.7 385.5L335.3 390.3L320.4 392.5ZM1176.4 383.0L1190.7 385.5L1191.3 390.3L1176.4 392.5ZM767.4 383.0L772.2 385.5L771.0 390.3L767.4 390.3ZM339.4 383.0L344.2 385.5L343.0 390.3L339.4 390.3ZM1195.4 383.0L1200.2 385.5L1199.0 390.3L1195.4 390.3ZM743.6 377.7L750.8 380.4L747.2 385.5L741.3 383.0ZM315.6 377.7L322.8 380.4L319.2 385.5L313.3 383.0ZM1171.6 377.7L1178.8 380.4L1175.2 385.5L1169.3 383.0ZM767.4 395.6L772.8 396.9L772.2 403.6L766.2 402.1ZM339.4 395.6L344.8 396.9L344.2 403.6L338.2 402.1ZM1195.4 395.6L1200.8 396.9L1200.2 403.6L1194.2 402.1ZM774.6 394.7L779.9 394.7L778.1 402.9L774.6 400.9ZM346.6 394.7L351.9 394.7L350.1 402.9L346.6 400.9ZM1202.6 394.7L1207.9 394.7L1206.1 402.9L1202.6 400.9ZM769.8 411.9L774.6 411.9L773.4 415.9L769.8 414.2ZM341.8 411.9L346.6 411.9L345.4 415.9L341.8 414.2ZM1197.8 411.9L1202.6 411.9L1201.4 415.9L1197.8 414.2ZM774.6 352.9L784.1 355.2L785.3 372.0L778.1 374.9L772.2 365.8ZM346.6 352.9L356.1 355.2L357.3 372.0L350.1 374.9L344.2 365.8ZM1202.6 352.9L1212.1 355.2L1213.3 372.0L1206.1 374.9L1200.2 365.8ZM782.9 423.5L790.0 427.2L787.6 431.7L783.5 429.1ZM354.9 423.5L362.0 427.2L359.6 431.7L355.5 429.1ZM1210.9 423.5L1218.0 427.2L1215.6 431.7L1211.5 429.1ZM817.0 463.9L820.9 456.5L821.5 460.5L824.8 463.9L823.9 465.6L820.9 464.1ZM389.0 463.9L392.9 456.5L393.5 460.5L396.8 463.9L395.9 465.6L392.9 464.1ZM1245.0 463.9L1248.9 456.5L1249.5 460.5L1252.8 463.9L1251.9 465.6L1248.9 464.1ZM786.4 501.7L791.8 500.2L796.0 502.2L799.3 503.9L795.4 504.3L791.2 501.8ZM358.4 501.7L363.8 500.2L368.0 502.2L371.3 503.9L367.4 504.3L363.2 501.8ZM1214.4 501.7L1219.8 500.2L1224.0 502.2L1227.3 503.9L1223.4 504.3L1219.2 501.8ZM798.9 504.4L804.9 504.4L806.3 505.9L802.5 507.1L799.0 506.3ZM370.9 504.4L376.9 504.4L378.3 505.9L374.5 507.1L371.0 506.3ZM1226.9 504.4L1232.9 504.4L1234.3 505.9L1230.5 507.1L1227.0 506.3ZM794.4 506.1L796.9 506.5L796.2 507.0L794.5 506.4ZM366.4 506.1L368.9 506.5L368.2 507.0L366.5 506.4ZM1222.4 506.1L1224.9 506.5L1224.2 507.0L1222.5 506.4ZM807.6 506.0L809.5 506.1L809.3 506.6L807.6 506.6ZM379.6 506.0L381.5 506.1L381.3 506.6L379.6 506.6ZM1235.6 506.0L1237.5 506.1L1237.3 506.6L1235.6 506.6ZM729.4 451.4L731.2 451.8L730.6 455.2L731.8 454.8ZM301.4 451.4L303.2 451.8L302.6 455.2L303.8 454.8ZM1157.4 451.4L1159.2 451.8L1158.6 455.2L1159.8 454.8ZM880.7 459.6L889.3 457.7L889.5 454.4L887.5 452.8L885.7 449.8L885.1 445.5L885.4 444.2L882.7 444.2L883.9 442.0L881.6 442.0L880.1 446.6L881.0 449.2L883.9 450.0L883.7 452.8L881.6 454.2L881.3 456.4L883.9 456.7ZM452.7 459.6L461.3 457.7L461.5 454.4L459.5 452.8L457.7 449.8L457.1 445.5L457.4 444.2L454.7 444.2L455.9 442.0L453.6 442.0L452.1 446.6L453.0 449.2L455.9 450.0L455.7 452.8L453.6 454.2L453.3 456.4L455.9 456.7ZM1308.7 459.6L1317.3 457.7L1317.5 454.4L1315.5 452.8L1313.7 449.8L1313.1 445.5L1313.4 444.2L1310.7 444.2L1311.9 442.0L1309.6 442.0L1308.1 446.6L1309.0 449.2L1311.9 450.0L1311.7 452.8L1309.6 454.2L1309.3 456.4L1311.9 456.7ZM880.4 455.4L880.4 451.8L878.8 449.2L877.4 450.8L875.6 451.8L875.4 456.2L878.0 456.5ZM452.4 455.4L452.4 451.8L450.8 449.2L449.4 450.8L447.6 451.8L447.4 456.2L450.0 456.5ZM1308.4 455.4L1308.4 451.8L1306.8 449.2L1305.4 450.8L1303.6 451.8L1303.4 456.2L1306.0 456.5ZM859.0 424.4L861.9 422.3L868.5 421.4L871.5 425.8L869.7 428.0L865.5 430.2L860.5 429.1ZM431.0 424.4L433.9 422.3L440.5 421.4L443.5 425.8L441.7 428.0L437.5 430.2L432.5 429.1ZM1287.0 424.4L1289.9 422.3L1296.5 421.4L1299.5 425.8L1297.7 428.0L1293.5 430.2L1288.5 429.1ZM900.0 365.8L908.9 358.9L919.6 362.4L913.7 374.9L907.1 383.0L903.0 374.9ZM472.0 365.8L480.9 358.9L491.6 362.4L485.7 374.9L479.1 383.0L475.0 374.9ZM1328.0 365.8L1336.9 358.9L1347.6 362.4L1341.7 374.9L1335.1 383.0L1331.0 374.9ZM949.3 404.8L954.1 396.9L958.8 387.9L969.5 381.5L966.0 387.9L956.5 398.9L954.1 408.4ZM521.3 404.8L526.1 396.9L530.8 387.9L541.5 381.5L538.0 387.9L528.5 398.9L526.1 408.4ZM1377.3 404.8L1382.1 396.9L1386.8 387.9L1397.5 381.5L1394.0 387.9L1384.5 398.9L1382.1 408.4ZM944.6 358.9L956.5 351.3L963.6 358.9L952.9 363.8ZM516.6 358.9L528.5 351.3L535.6 358.9L524.9 363.8ZM1372.6 358.9L1384.5 351.3L1391.6 358.9L1380.9 363.8ZM1000.4 362.4L1006.4 355.2L1012.3 369.0L1006.4 373.2ZM572.4 362.4L578.4 355.2L584.3 369.0L578.4 373.2ZM1428.4 362.4L1434.4 355.2L1440.3 369.0L1434.4 373.2ZM1050.4 390.3L1056.3 387.9L1065.8 387.9L1061.1 393.4L1051.6 394.7ZM622.4 390.3L628.3 387.9L637.8 387.9L633.1 393.4L623.6 394.7ZM1478.4 390.3L1484.3 387.9L1493.8 387.9L1489.1 393.4L1479.6 394.7ZM1099.7 404.8L1105.1 404.8L1102.7 407.4L1099.7 407.4ZM671.7 404.8L677.1 404.8L674.7 407.4L671.7 407.4ZM1527.7 404.8L1533.1 404.8L1530.7 407.4L1527.7 407.4ZM1056.3 451.2L1058.1 459.6L1058.1 465.8L1056.3 466.7L1056.3 457.7L1056.0 451.8ZM628.3 451.2L630.1 459.6L630.1 465.8L628.3 466.7L628.3 457.7L628.0 451.8ZM1484.3 451.2L1486.1 459.6L1486.1 465.8L1484.3 466.7L1484.3 457.7L1484.0 451.8ZM1055.7 467.5L1060.5 471.2L1057.5 473.3L1053.9 474.1ZM627.7 467.5L632.5 471.2L629.5 473.3L625.9 474.1ZM1483.7 467.5L1488.5 471.2L1485.5 473.3L1481.9 474.1ZM1054.5 474.4L1056.3 477.2L1054.9 482.9L1052.5 484.5L1048.0 485.8L1043.2 485.4L1044.4 483.3L1049.2 482.9L1053.9 479.5ZM626.5 474.4L628.3 477.2L626.9 482.9L624.5 484.5L620.0 485.8L615.2 485.4L616.4 483.3L621.2 482.9L625.9 479.5ZM1482.5 474.4L1484.3 477.2L1482.9 482.9L1480.5 484.5L1476.0 485.8L1471.2 485.4L1472.4 483.3L1477.2 482.9L1481.9 479.5ZM1041.7 485.7L1044.4 485.7L1043.8 489.2L1042.3 489.3ZM613.7 485.7L616.4 485.7L615.8 489.2L614.3 489.3ZM1469.7 485.7L1472.4 485.7L1471.8 489.2L1470.3 489.3ZM1045.0 485.1L1047.6 485.1L1046.8 486.5L1045.1 486.8ZM617.0 485.1L619.6 485.1L618.8 486.5L617.1 486.8ZM1473.0 485.1L1475.6 485.1L1474.8 486.5L1473.1 486.8ZM1030.8 497.7L1032.5 497.7L1031.4 501.6L1030.4 500.3ZM602.8 497.7L604.5 497.7L603.4 501.6L602.4 500.3ZM1458.8 497.7L1460.5 497.7L1459.4 501.6L1458.4 500.3ZM1016.6 504.4L1019.5 504.1L1018.5 506.3L1016.6 505.9ZM588.6 504.4L591.5 504.1L590.5 506.3L588.6 505.9ZM1444.6 504.4L1447.5 504.1L1446.5 506.3L1444.6 505.9ZM1030.2 506.0L1033.1 506.3L1034.9 512.8L1032.5 512.2L1030.8 511.6ZM602.2 506.0L605.1 506.3L606.9 512.8L604.5 512.2L602.8 511.6ZM1458.2 506.0L1461.1 506.3L1462.9 512.8L1460.5 512.2L1458.8 511.6ZM1032.5 518.3L1037.9 516.7L1037.7 520.9L1036.1 521.7L1032.5 520.1ZM604.5 518.3L609.9 516.7L609.7 520.9L608.1 521.7L604.5 520.1ZM1460.5 518.3L1465.9 516.7L1465.7 520.9L1464.1 521.7L1460.5 520.1ZM1017.1 526.6L1020.7 524.8L1026.0 520.1L1029.0 522.4L1027.2 527.2L1025.4 532.9L1018.9 532.0L1017.1 528.4ZM589.1 526.6L592.7 524.8L598.0 520.1L601.0 522.4L599.2 527.2L597.4 532.9L590.9 532.0L589.1 528.4ZM1445.1 526.6L1448.7 524.8L1454.0 520.1L1457.0 522.4L1455.2 527.2L1453.4 532.9L1446.9 532.0L1445.1 528.4ZM1000.8 521.7L1004.0 523.6L1011.1 530.2L1013.5 532.6L1013.3 535.5L1008.8 533.2L1002.8 527.2ZM572.8 521.7L576.0 523.6L583.1 530.2L585.5 532.6L585.3 535.5L580.8 533.2L574.8 527.2ZM1428.8 521.7L1432.0 523.6L1439.1 530.2L1441.5 532.6L1441.3 535.5L1436.8 533.2L1430.8 527.2ZM1012.6 536.5L1019.5 536.1L1023.7 537.9L1015.9 537.7ZM584.6 536.5L591.5 536.1L595.7 537.9L587.9 537.7ZM1440.6 536.5L1447.5 536.1L1451.7 537.9L1443.9 537.7ZM1029.0 534.9L1030.8 531.6L1030.2 527.8L1036.1 526.6L1031.4 529.6L1034.3 533.2L1032.3 534.4ZM601.0 534.9L602.8 531.6L602.2 527.8L608.1 526.6L603.4 529.6L606.3 533.2L604.3 534.4ZM1457.0 534.9L1458.8 531.6L1458.2 527.8L1464.1 526.6L1459.4 529.6L1462.3 533.2L1460.3 534.4ZM1043.2 530.2L1048.0 532.3L1055.1 531.5L1060.8 534.4L1062.9 536.1L1066.8 541.0L1062.9 540.3L1058.1 539.1L1055.1 539.3L1051.6 538.3L1051.0 534.4L1045.6 533.2L1044.4 532.0ZM615.2 530.2L620.0 532.3L627.1 531.5L632.8 534.4L634.9 536.1L638.8 541.0L634.9 540.3L630.1 539.1L627.1 539.3L623.6 538.3L623.0 534.4L617.6 533.2L616.4 532.0ZM1471.2 530.2L1476.0 532.3L1483.1 531.5L1488.8 534.4L1490.9 536.1L1494.8 541.0L1490.9 540.3L1486.1 539.1L1483.1 539.3L1479.6 538.3L1479.0 534.4L1473.6 533.2L1472.4 532.0ZM1023.0 555.2L1022.1 560.4L1024.2 570.7L1027.2 572.9L1034.3 571.3L1040.9 568.2L1044.4 568.6L1048.6 572.6L1051.3 570.3L1052.2 573.7L1053.9 577.0L1058.1 578.5L1061.6 579.0L1065.8 576.6L1067.6 570.0L1070.1 563.9L1069.4 559.4L1064.6 553.9L1061.1 550.2L1060.2 546.2L1056.9 541.2L1055.7 544.0L1055.7 548.9L1054.9 549.5L1053.0 549.5L1049.2 547.1L1050.4 543.1L1049.8 542.7L1045.0 541.8L1042.1 544.0L1041.5 546.4L1037.9 545.2L1034.3 548.9L1032.8 550.2L1031.4 552.0L1026.0 553.6ZM595.0 555.2L594.1 560.4L596.2 570.7L599.2 572.9L606.3 571.3L612.9 568.2L616.4 568.6L620.6 572.6L623.3 570.3L624.2 573.7L625.9 577.0L630.1 578.5L633.6 579.0L637.8 576.6L639.6 570.0L642.1 563.9L641.4 559.4L636.6 553.9L633.1 550.2L632.2 546.2L628.9 541.2L627.7 544.0L627.7 548.9L626.9 549.5L625.0 549.5L621.2 547.1L622.4 543.1L621.8 542.7L617.0 541.8L614.1 544.0L613.5 546.4L609.9 545.2L606.3 548.9L604.8 550.2L603.4 552.0L598.0 553.6ZM1451.0 555.2L1450.1 560.4L1452.2 570.7L1455.2 572.9L1462.3 571.3L1468.9 568.2L1472.4 568.6L1476.6 572.6L1479.3 570.3L1480.2 573.7L1481.9 577.0L1486.1 578.5L1489.6 579.0L1493.8 576.6L1495.6 570.0L1498.1 563.9L1497.4 559.4L1492.6 553.9L1489.1 550.2L1488.2 546.2L1484.9 541.2L1483.7 544.0L1483.7 548.9L1482.9 549.5L1481.0 549.5L1477.2 547.1L1478.4 543.1L1477.8 542.7L1473.0 541.8L1470.1 544.0L1469.5 546.4L1465.9 545.2L1462.3 548.9L1460.8 550.2L1459.4 552.0L1454.0 553.6ZM1059.4 581.5L1063.8 581.8L1063.2 585.5L1062.0 586.1L1060.2 583.8ZM631.4 581.5L635.8 581.8L635.2 585.5L634.0 586.1L632.2 583.8ZM1487.4 581.5L1491.8 581.8L1491.2 585.5L1490.0 586.1L1488.2 583.8ZM1092.7 572.0L1095.3 575.5L1099.7 576.9L1097.9 579.6L1095.6 582.7L1095.0 579.6L1094.1 578.8L1095.0 575.8ZM664.7 572.0L667.3 575.5L671.7 576.9L669.9 579.6L667.6 582.7L667.0 579.6L666.1 578.8L667.0 575.8ZM1520.7 572.0L1523.3 575.5L1527.7 576.9L1525.9 579.6L1523.6 582.7L1523.0 579.6L1522.1 578.8L1523.0 575.8ZM1092.8 581.1L1094.7 583.2L1093.2 586.4L1090.8 588.4L1088.4 591.2L1085.5 590.1L1087.2 586.8L1090.8 583.5ZM664.8 581.1L666.7 583.2L665.2 586.4L662.8 588.4L660.4 591.2L657.5 590.1L659.2 586.8L662.8 583.5ZM1520.8 581.1L1522.7 583.2L1521.2 586.4L1518.8 588.4L1516.4 591.2L1513.5 590.1L1515.2 586.8L1518.8 583.5ZM982.4 516.7L984.9 519.5L984.0 521.3L982.4 520.7ZM554.4 516.7L556.9 519.5L556.0 521.3L554.4 520.7ZM1410.4 516.7L1412.9 519.5L1412.0 521.3L1410.4 520.7Z" fill="#f3f2ee" stroke="#e4e6ea" stroke-width="0.5" stroke-linejoin="round"/><path d="M920.8 474.1L920.8 470.9L922.6 468.0L924.4 465.6L927.3 466.7L930.9 467.9L932.7 464.9L934.5 464.9L932.1 469.2L936.8 474.1L930.3 474.1L924.4 474.7ZM492.8 474.1L492.8 470.9L494.6 468.0L496.4 465.6L499.3 466.7L502.9 467.9L504.7 464.9L506.5 464.9L504.1 469.2L508.8 474.1L502.3 474.1L496.4 474.7ZM943.4 469.2L945.8 465.8L950.5 465.8L950.5 473.3L951.7 478.0L951.5 481.0L947.5 481.0L945.8 478.7L946.4 475.7L944.0 472.5ZM515.4 469.2L517.8 465.8L522.5 465.8L522.5 473.3L523.7 478.0L523.5 481.0L519.5 481.0L517.8 478.7L518.4 475.7L516.0 472.5Z" fill="#acc8f2"/></g></svg>
<svg style="left:0;top:0" width="1049" height="641" viewBox="0 0 1049 641"><defs><clipPath id="mc2"><rect x="574.5" y="315.3" width="406.5" height="309.2"/></clipPath><filter id="sh" x="-30%" y="-30%" width="160%" height="180%"><feGaussianBlur in="SourceAlpha" stdDeviation="1.6"/><feOffset dx="1.5" dy="2"/><feComponentTransfer><feFuncA type="linear" slope="0.55"/></feComponentTransfer><feMerge><feMergeNode/><feMergeNode in="SourceGraphic"/></feMerge></filter><linearGradient id="pg" x1="0" y1="0" x2="0" y2="1"><stop offset="0" stop-color="#ececed"/><stop offset="1" stop-color="#d9d9db"/></linearGradient></defs><g clip-path="url(#mc2)"><text x="691" y="359.8" font-family="Liberation Sans" font-size="9" fill="#5b7cb6" text-anchor="middle" letter-spacing="0.9">Arctic</text><text x="691.5" y="369.3" font-family="Liberation Sans" font-size="9" fill="#5b7cb6" text-anchor="middle" letter-spacing="0.9">Ocean</text><text x="691" y="488" font-family="Liberation Sans" font-size="9" fill="#5b7cb6" text-anchor="middle" letter-spacing="0.9">Pacific</text><text x="691.5" y="497.8" font-family="Liberation Sans" font-size="9" fill="#5b7cb6" text-anchor="middle" letter-spacing="0.9">Ocean</text><text x="839" y="489" font-family="Liberation Sans" font-size="9" fill="#5b7cb6" text-anchor="middle" letter-spacing="1.1">Atlantic</text><text x="839.5" y="499.3" font-family="Liberation Sans" font-size="9" fill="#5b7cb6" text-anchor="middle" letter-spacing="0.9">Ocean</text><text x="968" y="553.3" font-family="Liberation Sans" font-size="9" fill="#5b7cb6" text-anchor="start" letter-spacing="0.9">Ind</text><text x="968" y="563" font-family="Liberation Sans" font-size="9" fill="#5b7cb6" text-anchor="start" letter-spacing="0.9">Oc</text><text x="593.7" y="453.5" font-family="Liberation Sans" font-size="9.5" fill="#2e2e2e" text-anchor="end" font-weight="bold">ASIA</text><text x="769.2" y="456.9" font-family="Liberation Sans" font-size="9.5" fill="#2e2e2e" text-anchor="middle" font-weight="bold">NORTH AMERICA</text><text x="917.3" y="461.5" font-family="Liberation Sans" font-size="9.3" fill="#2e2e2e" text-anchor="middle" font-weight="bold">EUROPE</text><text x="935.6" y="525.1" font-family="Liberation Sans" font-size="9.3" fill="#2e2e2e" text-anchor="end" font-weight="bold">AFRICA</text><text x="827.9" y="552.7" font-family="Liberation Sans" font-size="9.4" fill="#2e2e2e" text-anchor="middle" font-weight="bold">SOUTH AMERICA</text><text x="626.3" y="558.6" font-family="Liberation Sans" font-size="9.2" fill="#2e2e2e" text-anchor="middle" font-weight="bold">AUSTRALIA</text><g fill="#222"><path d="M919 440.5L926.5 459.3L934 440.5Z"/></g><circle cx="926.5" cy="420.9" r="20.2" fill="none" stroke="#222" stroke-width="6.5"/><circle cx="888.8" cy="497.5" r="24.6" fill="#000"/><circle cx="888.8" cy="497.5" r="28.7" fill="none" stroke="#000" stroke-width="5" stroke-dasharray="30.48 14.60" stroke-dashoffset="37.78"/><circle cx="1003.2" cy="514" r="24.6" fill="#000"/><circle cx="1003.2" cy="514" r="28.7" fill="none" stroke="#000" stroke-width="5" stroke-dasharray="30.48 14.60" stroke-dashoffset="37.78"/><text x="975.7" y="580.8" font-family="Liberation Sans" font-size="10.6" fill="#222" text-anchor="end">10000 miles</text><rect x="831.5" y="589" width="143.5" height="5.5" fill="#4db3ef" stroke="#2a3a4a" stroke-width="1"/><text x="892" y="612.5" font-family="Liberation Sans" font-size="10.2" fill="#222" text-anchor="end">© 2025 Microsoft Corporation</text><text x="975.7" y="612.5" font-family="Liberation Sans" font-size="10" fill="#222" text-anchor="end">© 2025 TomTom</text><g fill="#eef2fa" stroke="#8d97a8" stroke-width="0.9" stroke-opacity="0.8"><path d="M588.3 590.3l4 1.4v12.3l6.3-3.7l-2.7-1.4l-1.4-3.6l9 3.3v4.6l-11.2 6.5l-4-2.2Z"/></g><text x="607" y="605.5" font-family="Liberation Sans" font-size="16.5" fill="#e4e9f2" text-anchor="start" stroke="#8d97a8" stroke-width="0.6" stroke-opacity="0.8" letter-spacing="-0.3">bing</text></g><rect x="580.5" y="320.5" width="204" height="25" rx="12.5" fill="#fff" stroke="#6a6a6a" stroke-width="1"/><text x="597.6" y="336.9" font-family="Liberation Sans" font-size="11.6" fill="#8a8a8a" text-anchor="start">Search locations</text><circle cx="768.5" cy="332.9" r="8.6" fill="#003366"/><path d="M763.3 332.9h10.4M768.5 327.7v10.4" stroke="#fff" stroke-width="1.4"/><circle cx="804.3" cy="332.9" r="9.3" fill="#e61e28"/><path d="M803.90 332.90L803.25 328.00L805.35 328.00L804.70 332.90ZM804.18 333.28L799.32 332.38L799.96 330.39L804.42 332.52ZM804.62 333.14L802.27 337.48L800.57 336.25L803.98 332.66ZM804.62 332.66L808.03 336.25L806.33 337.48L803.98 333.14ZM804.18 332.52L808.64 330.39L809.28 332.38L804.42 333.28Z" fill="#fff" stroke="#fff" stroke-width="0.6" stroke-linejoin="round"/><circle cx="804.3" cy="332.9" r="1" fill="#fff"/><g filter="url(#sh)"><rect x="855" y="321.3" width="71.7" height="23.4" rx="11.7" fill="url(#pg)"/><circle cx="941.1" cy="333.4" r="8.7" fill="url(#pg)"/><circle cx="963" cy="333.4" r="8.8" fill="url(#pg)"/></g><text x="860.4" y="337.6" font-family="Liberation Sans" font-size="11.5" fill="#ababab" text-anchor="start">Aerial</text><text x="893.7" y="337.6" font-family="Liberation Sans" font-size="11.2" fill="#666" text-anchor="start" font-weight="bold">Road</text><g stroke="#555" stroke-width="2.8"><path d="M936.6 333.4h9M941.1 328.9v9M958.6 333.4h9"/></g></svg>
</body></html>
